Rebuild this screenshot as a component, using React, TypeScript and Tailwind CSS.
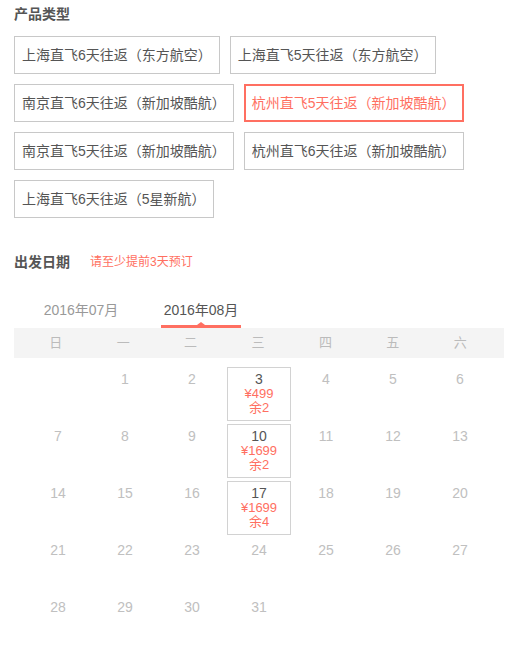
import React from "react";

const FONT = '"Liberation Sans", "Noto Sans CJK SC", sans-serif';

const products = [
  "上海直飞6天往返（东方航空）",
  "上海直飞5天往返（东方航空）",
  "南京直飞6天往返（新加坡酷航）",
  "杭州直飞5天往返（新加坡酷航）",
  "南京直飞5天往返（新加坡酷航）",
  "杭州直飞6天往返（新加坡酷航）",
  "上海直飞6天往返（5星新航）",
];

const weekdays = ["日", "一", "二", "三", "四", "五", "六"];

type Day = { d: number; price?: string; left?: string } | null;

const days: Day[] = [
  null,
  { d: 1 }, { d: 2 }, { d: 3, price: "¥499", left: "余2" }, { d: 4 }, { d: 5 }, { d: 6 },
  { d: 7 }, { d: 8 }, { d: 9 }, { d: 10, price: "¥1699", left: "余2" }, { d: 11 }, { d: 12 }, { d: 13 },
  { d: 14 }, { d: 15 }, { d: 16 }, { d: 17, price: "¥1699", left: "余4" }, { d: 18 }, { d: 19 }, { d: 20 },
  { d: 21 }, { d: 22 }, { d: 23 }, { d: 24 }, { d: 25 }, { d: 26 }, { d: 27 },
  { d: 28 }, { d: 29 }, { d: 30 }, { d: 31 }, null, null, null,
];

export default function App() {
  return (
    <div
      className="w-[516px] h-[657px] bg-white pl-[14px] pr-[12px] pt-[4px] overflow-hidden"
      style={{ fontFamily: FONT }}
    >
      <div className="text-[14px] leading-[20px] font-bold text-[#555]">产品类型</div>
      <div className="mt-[12px] flex flex-wrap gap-[10px]">
        {products.map((p, i) =>
          i === 3 ? (
            <div
              key={i}
              className="h-[38px] border-2 border-[#ff6f61] px-[6px] text-[14px] leading-[34px] text-[#ff6f61] whitespace-nowrap"
            >
              {p}
            </div>
          ) : (
            <div
              key={i}
              className="h-[38px] border border-[#c8c8c8] px-[7px] text-[14px] leading-[36px] text-[#555] whitespace-nowrap"
            >
              {p}
            </div>
          )
        )}
      </div>

      <div className="mt-[34px] flex items-center">
        <span className="text-[14px] leading-[20px] font-bold text-[#555]">出发日期</span>
        <span className="ml-[20px] text-[12px] leading-[20px] text-[#ff6f61]">请至少提前3天预订</span>
      </div>

      <div className="mt-[28px] flex pl-[27px] gap-[40px]">
        <div className="w-[80px] text-center pb-[8px] text-[14px] leading-[20px] text-[#999]">2016年07月</div>
        <div className="relative w-[80px] text-center pb-[5px] border-b-[3px] border-[#ff6f61] text-[14px] leading-[20px] text-[#555]">
          2016年08月
          <span className="absolute left-1/2 -translate-x-1/2 bottom-0 w-0 h-0 border-l-[4px] border-r-[4px] border-b-[3px] border-l-transparent border-r-transparent border-b-[#ff6f61]" />
        </div>
      </div>

      <div className="h-[30px] bg-[#f4f4f4] grid grid-cols-7 pl-[8px] pr-[10px]">
        {weekdays.map((w) => (
          <div key={w} className="flex items-center justify-center text-[13px] text-[#bbb]">
            {w}
          </div>
        ))}
      </div>

      <div className="mt-[9px] mx-auto w-[466px] grid grid-cols-[repeat(7,64px)] auto-rows-[54px] gap-[3px]">
        {days.map((day, i) =>
          day === null ? (
            <div key={i} />
          ) : day.price ? (
            <div
              key={i}
              className="border border-[#d2d2d2] pt-[3px] flex flex-col items-center"
            >
              <div className="text-[14px] leading-[16px] text-[#555]">{day.d}</div>
              <div className="text-[13px] leading-[14px] text-[#ff6f61]">{day.price}</div>
              <div className="text-[13px] leading-[14px] text-[#ff6f61]">{day.left}</div>
            </div>
          ) : (
            <div key={i} className="border border-transparent pt-[3px] flex flex-col items-center">
              <div className="text-[14px] leading-[16px] text-[#c0c0c0]">{day.d}</div>
            </div>
          )
        )}
      </div>
    </div>
  );
}
